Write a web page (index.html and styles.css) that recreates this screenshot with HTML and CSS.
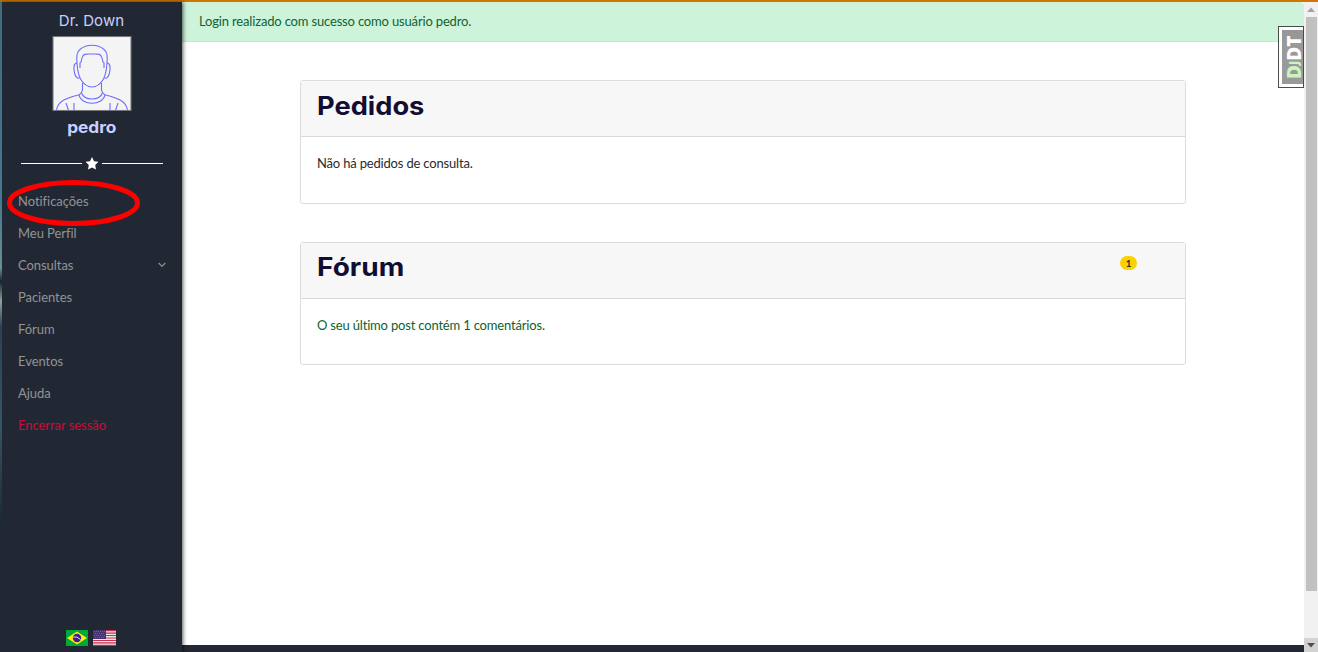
FILE: index.html
```html
<!DOCTYPE html>
<html lang="pt-br">
<head>
<meta charset="utf-8">
<title>Dr. Down</title>
<link rel="stylesheet" href="styles.css">
</head>
<body>
<div class="app">
  <aside class="sidebar">
    <div class="brand">Dr. Down</div>
    <svg class="avatar" viewBox="0 0 79 75" fill="none" stroke="#6c6cff" stroke-width="1.1">
      <rect x=".5" y=".5" width="78" height="74" fill="#f4f4f4" stroke="#77787b"/>
      <path d="M24.500 27C25 35 26 39 28 43C31 48 35 51 39.500 51C44 51 48 48 51 43C53 39 54 35 54.500 27C55 20 55 16 51 13C45 8 34 8 28 13C24 16 24 20 24.500 27Z"/>
      <path d="M27.500 32V27C30 25 28 24 30 21C31 18 33 18 36 18H43C46 18 48 18 49 21C51 24 49 25 51.500 27V32"/>
      <path d="M24.500 27C21 27 21 32 22 37C23 41 25 43 27 42M54.500 27C58 27 58 32 57 37C56 41 54 43 52 42"/>
      <path d="M30 47V53C30 57 28 58 26 59C14 62 5 65 4 74.500M49 47V53C49 57 51 58 53 59C65 62 74 65 75 74.500"/>
      <path d="M29 57C32 65 47 65 50 57M26.500 59C29 70 50 70 52.500 59M13.500 67L16 74.500M65.500 67L63 74.500M21.500 67V74.500M57.500 67V74.500"/>
    </svg>
    <div class="username">pedro</div>
    <div class="divider">
      <span class="line"></span>
      <svg class="star" viewBox="0 0 14 13"><path fill="#fff" d="M7 0L9 4.200L13.500 4.800L10.200 8L11 12.500L7 10.400L3 12.500L3.800 8L.5 4.800L5 4.200Z"/></svg>
      <span class="line"></span>
    </div>
    <nav class="menu">
      <a class="item">Notificações</a>
      <a class="item">Meu Perfil</a>
      <a class="item">Consultas<svg class="chevron" viewBox="0 0 8 6"><path d="M.7 1L4 4.500L7.300 1" fill="none" stroke="#8f9196" stroke-width="1.200"/></svg></a>
      <a class="item">Pacientes</a>
      <a class="item">Fórum</a>
      <a class="item">Eventos</a>
      <a class="item">Ajuda</a>
      <a class="item logout">Encerrar sessão</a>
    </nav>
    <div class="flags">
      <svg class="flag-br" viewBox="0 0 22 16"><path fill="#00a839" d="M0 0H22V16H0Z"/><path fill="#fff200" d="M11 1.500L21 8L11 14.500L1 8Z"/><circle cx="11" cy="8" r="4.200" fill="#3f1d94"/><path d="M7.200 7Q11 6 14.500 9.500" fill="none" stroke="#d5dcf0" stroke-width="1"/></svg>
      <svg class="flag-us" viewBox="0 0 23 16"><path fill="#f0e5e8" d="M0 0H23V16H0Z"/><path stroke="#c72f50" stroke-width="1.230" d="M0 .6H23M0 3.100H23M0 5.500H23M0 8H23M0 10.500H23M0 12.900H23M0 15.400H23"/><path fill="#463273" d="M0 0H13V9H0Z"/><path stroke="#75699c" stroke-width=".8" stroke-dasharray="1 1" d="M1 1.500H12M2 3.500H12M1 5.500H12M2 7.500H12"/></svg>
    </div>
    <svg class="highlight" viewBox="0 0 134 48"><ellipse cx="66.500" cy="24" rx="64" ry="20.500" fill="none" stroke="#f00" stroke-width="5"/></svg>
  </aside>
  <main class="content">
    <div class="alert">Login realizado com sucesso como usuário pedro.</div>
    <div class="cards">
      <section class="card">
        <header class="card-header"><h2 class="title">Pedidos</h2></header>
        <p class="card-body">Não há pedidos de consulta.</p>
      </section>
      <section class="card forum">
        <header class="card-header"><h2 class="title title-forum">Fórum</h2><span class="badge">1</span></header>
        <p class="card-body success">O seu último post contém 1 comentários.</p>
      </section>
    </div>
    <div class="debug"><div class="debug-label"><span class="dj">D<small>J</small></span>DT</div></div>
  </main>
  <div class="scrollbar">
    <svg class="arrow" viewBox="0 0 14 14"><path fill="#a3a3a3" d="M7 5.500L11 10H3Z"/></svg>
    <div class="thumb"></div>
    <svg class="arrow down" viewBox="0 0 14 14"><path fill="#505050" d="M3 5H11L7 9.500Z"/></svg>
  </div>
</div>
</body>
</html>
```
FILE: styles.css
```css
* { box-sizing: border-box; }
body { margin: 0; font-family: Lato, sans-serif; font-size: 13px; background: #222733; overflow: hidden; }
.app { display: flex; height: 652px; border-top: 2px solid #d17600; }
.sidebar {
  position: relative; z-index: 1; width: 182px; flex: none;
  display: flex; flex-direction: column; align-items: center;
  padding-right: 1px;
  background: #222833; border-left: 2px solid #416574;
  border-image: linear-gradient(#426b7d, #42798d 30%, #698e92 41%, #18232c 43%, #90a29d 46%, #294253 50%, #365665 65%, #1c2932 80%, #222833) 1;
  border-top: 0; border-right: 0; border-bottom: 0;
  box-shadow: 1px 0 4px rgba(0, 0, 0, .65);
}
.brand { margin-top: 8px; height: 22px; line-height: 22px; color: #c9d0ff; font-family: Inter, sans-serif; font-size: 15px; letter-spacing: .1px; }
.avatar { width: 80px; height: 75px; margin-top: 4px; flex: none; }
.username { margin-top: 5px; height: 22px; line-height: 22px; color: #c9d0ff; font-family: Inter, sans-serif; font-size: 16px; font-weight: 700; transform: scaleX(1.08); }
.divider { display: flex; align-items: center; gap: 3px; margin: 18px 0 0 1px; height: 14px; }
.line { width: 61px; height: 1px; background: #fff; }
.star { width: 14px; height: 13px; }
.menu { align-self: stretch; margin: 15px -1px 0 0; }
.item { display: flex; align-items: center; justify-content: space-between; height: 32px; padding: 0 16px; letter-spacing: -.05px; color: #929397; }
.chevron { width: 8px; height: 6px; }
.logout { color: #c90c3d; }
.flags { display: flex; gap: 5px; margin: auto 1px 6px 0; }
.flag-br { width: 22px; height: 16px; }
.flag-us { width: 23px; height: 16px; }
.highlight { position: absolute; left: 5px; top: 177px; width: 134px; height: 48px; }
.content { position: relative; flex: 1; height: 643px; background: #fff; }
.alert { height: 40px; padding: 0 17px; line-height: 38px; letter-spacing: -.165px; color: #0f6330; background: #cdf3da; border-bottom: 1px solid #bce9cc; border-radius: 0 3px 3px 0; }
.cards { width: 886px; margin: 38px 0 0 118px; }
.card { height: 124px; border: 1px solid #dcdcdc; border-radius: 3px; }
.card.forum { height: 123px; margin-top: 38px; }
.card-header { display: flex; justify-content: space-between; align-items: flex-start; height: 56px; padding: 0 48px 0 16px; background: #f7f7f7; border-bottom: 1px solid #d9d9d9; }
.title { margin: 8px 0 0; font: 700 25px/34px Inter, sans-serif; color: #120d32; transform: scaleX(1.09); transform-origin: left; }
.title-forum { margin-top: 7px; transform: scaleX(1.12); }
.card-body { margin: 0; padding: 16px 16px; line-height: 20px; letter-spacing: -.18px; color: #292b2c; }
.success { color: #0c6330; }
.badge { width: 17px; height: 14px; margin-top: 13px; border-radius: 7px; background: #fbd103; color: #332c17; font: 700 9.700px/14px Lato, sans-serif; text-align: center; }
.debug { position: absolute; right: 0; top: 24px; width: 26px; height: 62px; padding: 3px 0 3px 3px; border: 1px solid #444; background: #fff; opacity: .95; }
.debug-label { width: 21px; height: 54px; background: #949494; color: #fff; writing-mode: vertical-rl; transform: rotate(180deg); font: 800 19px/23px "Open Sans", sans-serif; text-align: center; }
.dj { color: #c8f3bb; }
.dj small { font-size: 12px; }
.scrollbar { display: flex; flex-direction: column; width: 14px; flex: none; background: #f1f1f1; }
.arrow { width: 14px; height: 14px; flex: none; }
.thumb { width: 11px; height: 574px; margin: 1px 0 0 2px; background: #c1c1c1; }
.down { margin-top: auto; background: #d2d2d2; }
```
